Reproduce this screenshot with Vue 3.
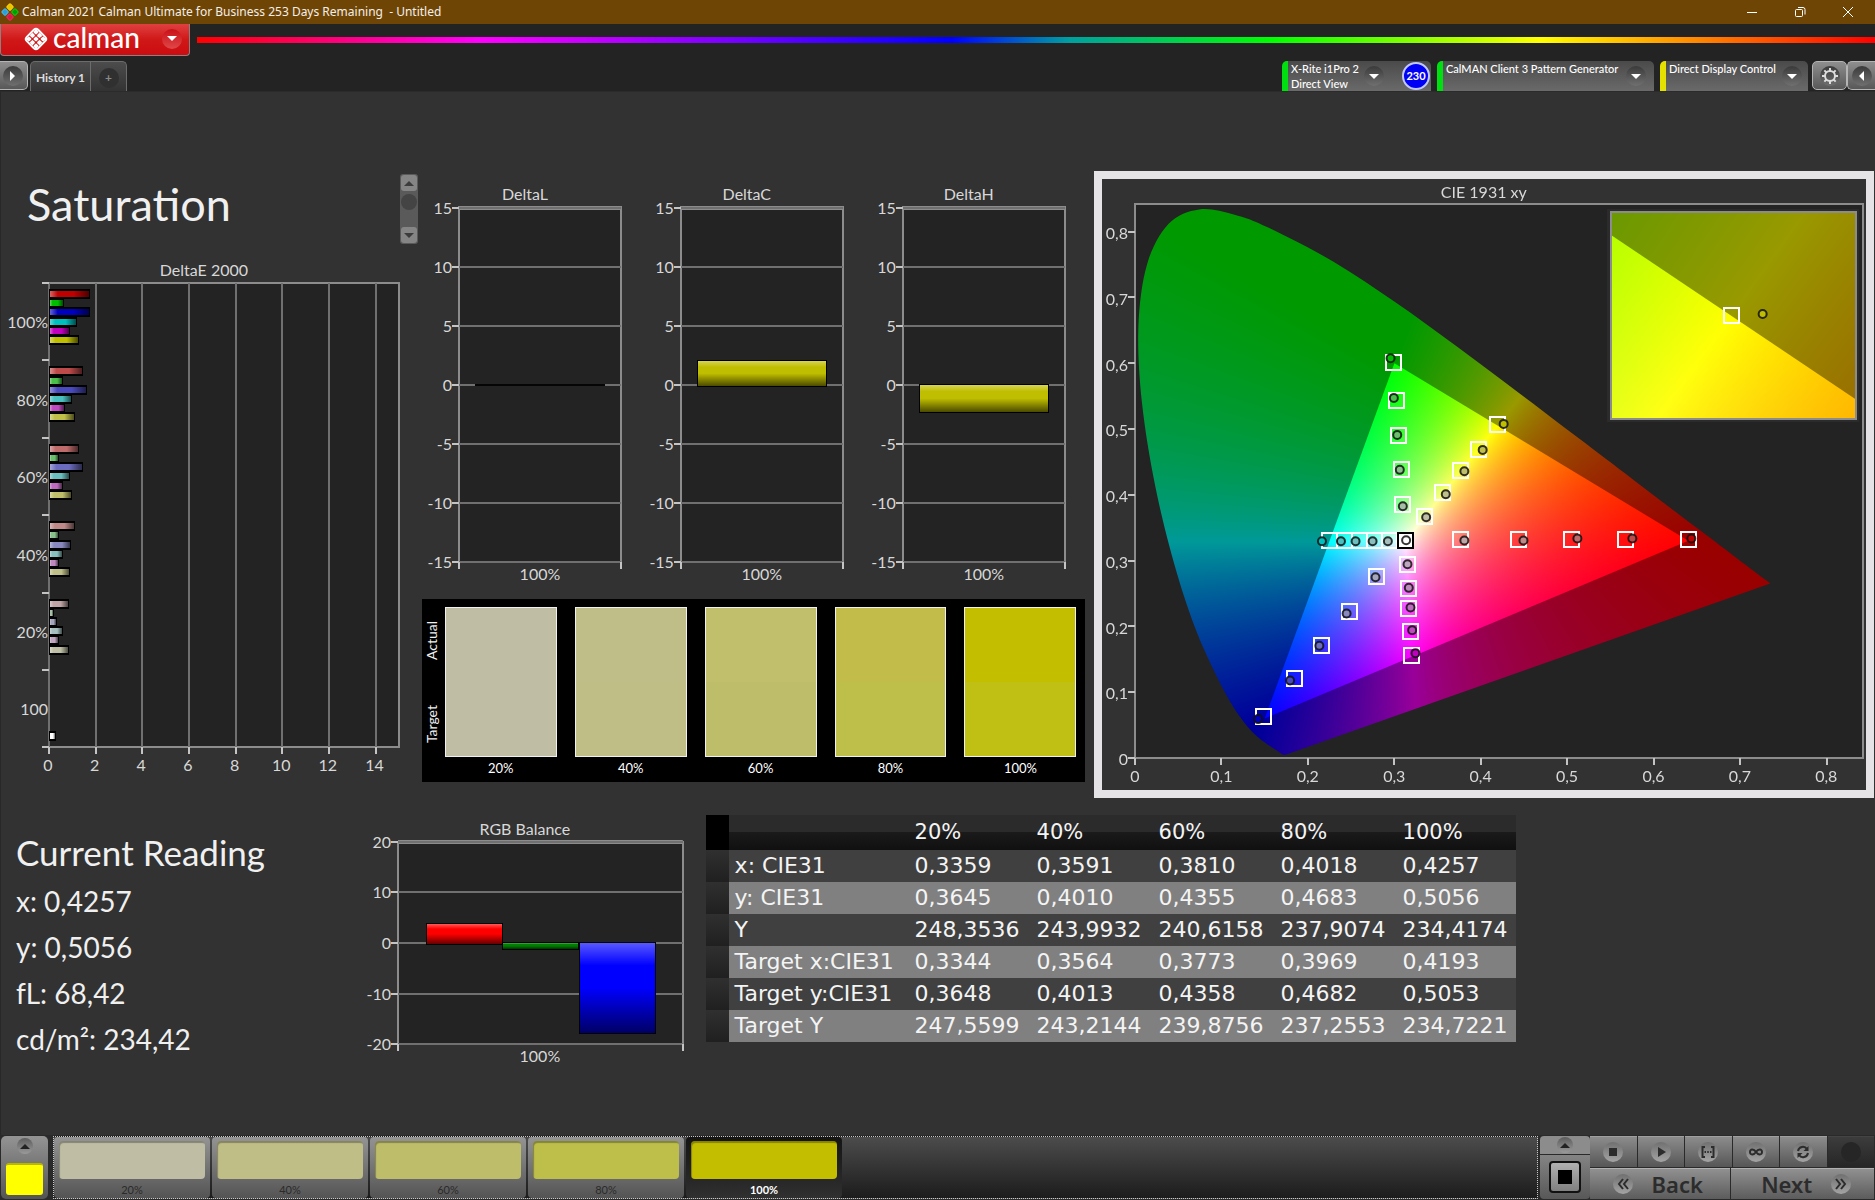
<script setup>
import { ref, onMounted } from 'vue'

const levels = ['20%', '40%', '60%', '80%', '100%']
const mix = { 20: 165, 40: 137, 60: 107, 80: 74, 100: 0 }

// channel masks for the six measured hues
const hues = {
  red: [1, 0, 0],
  green: [0, 1, 0],
  blue: [0, 0, 1],
  cyan: [0, 1, 1],
  magenta: [1, 0, 1],
  yellow: [1, 1, 0]
}
const tint = (hue, level) =>
  `rgb(${hues[hue].map(on => (on ? 191 : mix[level])).join(',')})`

/* DeltaE 2000 */
const deltaE = [
  { label: '100%', level: 100, values: [1.76, 0.66, 1.76, 1.22, 0.9, 1.3] },
  { label: '80%', level: 80, values: [1.44, 0.58, 1.62, 1, 0.68, 1.1] },
  { label: '60%', level: 60, values: [1.3, 0.42, 1.44, 0.92, 0.58, 0.98] },
  { label: '40%', level: 40, values: [1.1, 0.42, 0.96, 0.62, 0.42, 0.92] },
  { label: '20%', level: 20, values: [0.84, 0.22, 0.36, 0.58, 0.42, 0.84] }
]
const groupH = 77.4
const unitX = 350 / 15
const eTop = 27
const hueNames = Object.keys(hues)
const eBars = deltaE.flatMap((g, gi) =>
  g.values.map((v, i) => ({
    y: Math.round(eTop + gi * groupH + 6 + i * 9.2),
    w: Math.round(v * unitX),
    fill: tint(hueNames[i], g.level)
  }))
)
eBars.push({ y: Math.round(eTop + 5 * groupH + 61), w: 7, fill: '#ffffff' })
const eLabels = [...deltaE.map(g => g.label), '100']
const eTicks = [0, 2, 4, 6, 8, 10, 12, 14]

/* DeltaL / DeltaC / DeltaH */
const deltas = [
  { name: 'DeltaL', value: 0 },
  { name: 'DeltaC', value: 2.1 },
  { name: 'DeltaH', value: -2.3 }
]
const deltaTicks = [15, 10, 5, 0, -5, -10, -15]
const dy = v => Math.round(214 - v * 11.8)

/* RGB balance */
const rgbTicks = [20, 10, 0, -10, -20]
const ry = v => Math.round(129 - v * 5.06)
const rgbBars = [
  { x: 66, value: 4, fill: '#ff0000' },
  { x: 142, value: -1.2, fill: '#008000' },
  { x: 219, value: -17.8, fill: '#0000ff' }
]

const swatches = [
  ['#bfbea5', '#bfbea5'],
  ['#c0be88', '#bfbe87'],
  ['#c1bf6b', '#bebd6a'],
  ['#c2bc4a', '#bdbf4a'],
  ['#c4be00', '#bfbf14']
]

const readings = ['x: 0,4257', 'y: 0,5056', 'fL: 68,42', 'cd/m²: 234,42']

const rows = [
  ['x: CIE31', '0,3359', '0,3591', '0,3810', '0,4018', '0,4257'],
  ['y: CIE31', '0,3645', '0,4010', '0,4355', '0,4683', '0,5056'],
  ['Y', '248,3536', '243,9932', '240,6158', '237,9074', '234,4174'],
  ['Target x:CIE31', '0,3344', '0,3564', '0,3773', '0,3969', '0,4193'],
  ['Target y:CIE31', '0,3648', '0,4013', '0,4358', '0,4682', '0,5053'],
  ['Target Y', '247,5599', '243,2144', '239,8756', '237,2553', '234,7221']
]

/* CIE 1931 chart: plot area inside a 764 x 611 drawing */
const plot = { x: 33, y: 25, w: 728, h: 554, range: 0.842 }
const inset = { x: 509, y: 33, w: 245, h: 207, cx: 0.4193, cy: 0.5053, range: 0.049 }
const px = x => plot.x + (x * plot.w) / plot.range
const py = y => plot.y + plot.h - (y * plot.h) / plot.range
const cieTicks = [0, 1, 2, 3, 4, 5, 6, 7, 8]
const cieLabel = t => (t ? '0,' + t : '0')

const targets = [
  [.2988, .6013], [.3019, .5435], [.3038, .4903], [.3076, .4397], [.3092, .3855],
  [.4185, .5070], [.3962, .4701], [.3762, .4371], [.3546, .4047], [.3338, .3672],
  [.2245, .3307], [.2422, .3307], [.2591, .3307], [.2768, .3307], [.2942, .3307],
  [.1486, .0633], [.1837, .1210], [.2152, .1722], [.2472, .2234], [.2788, .2771],
  [.3196, .1560], [.3184, .1935], [.3161, .2274], [.3161, .2578], [.3142, .2953],
  [.6392, .3328], [.5669, .3328], [.5039, .3328], [.4431, .3328], [.3761, .3328]
]
const measured = [
  ['green', [[.2946, .6089], [.2984, .5486], [.3023, .4924], [.3053, .4392], [.3088, .3839]]],
  ['yellow', [[.4255, .5091], [.4012, .4696], [.3800, .4371], [.3585, .4022], [.3358, .3672]]],
  ['cyan', [[.2152, .3307], [.2372, .3307], [.2541, .3307], [.2738, .3307], [.2915, .3307]]],
  ['blue', [[.1413, .0602], [.1783, .1190], [.2122, .1717], [.2437, .2208], [.2772, .2760]]],
  ['magenta', [[.3234, .1605], [.3196, .1955], [.3177, .2299], [.3157, .2598], [.3142, .2958]]],
  ['red', [[.6427, .3348], [.5744, .3348], [.5108, .3348], [.4484, .3318], [.3800, .3318]]]
].flatMap(([hue, pts]) => pts.map((p, i) => ({ x: p[0], y: p[1], fill: tint(hue, 100 - i * 20) })))

const locus = [
  [.1741, .0050], [.1714, .0051], [.1689, .0069], [.1644, .0109], [.1566, .0177],
  [.1440, .0297], [.1355, .0399], [.1241, .0578], [.1096, .0868], [.0913, .1327],
  [.0687, .2007], [.0454, .2950], [.0235, .4127], [.0082, .5384], [.0039, .6548],
  [.0139, .7502], [.0389, .8120], [.0743, .8338], [.1142, .8262], [.1547, .8059],
  [.2296, .7543], [.3016, .6923], [.3731, .6245], [.4441, .5547], [.5125, .4866],
  [.5752, .4242], [.6270, .3725], [.6658, .3340], [.6915, .3083], [.7190, .2809],
  [.7300, .2700], [.7347, .2653]
]
const gamut = [[.64, .33], [.30, .60], [.15, .06]]

function colour(x, y) {
  const X = x / y
  const Z = (1 - x - y) / y
  const rgb = [
    3.2406 * X - 1.5372 - 0.4986 * Z,
    -0.9689 * X + 1.8758 + 0.0415 * Z,
    0.0557 * X - 0.2040 + 1.0570 * Z
  ].map(c => Math.max(0, c))
  const top = Math.max(...rgb) || 1
  return rgb.map(c => (c / top) * 255)
}

function field(w, h, toXY, gain) {
  const layer = document.createElement('canvas')
  layer.width = w
  layer.height = h
  const ctx = layer.getContext('2d')
  const img = ctx.createImageData(w, h)
  for (let j = 0, k = 0; j < h; j++) {
    for (let i = 0; i < w; i++, k += 4) {
      const [x, y] = toXY(i + 0.5, j + 0.5)
      const c = colour(x, Math.max(y, 0.001))
      img.data[k] = c[0] * gain
      img.data[k + 1] = c[1] * gain
      img.data[k + 2] = c[2] * gain
      img.data[k + 3] = 255
    }
  }
  ctx.putImageData(img, 0, 0)
  return layer
}

const canvas = ref(null)

onMounted(() => {
  const ctx = canvas.value.getContext('2d')

  const clipped = (trace, layer, at) => {
    ctx.save()
    ctx.beginPath()
    trace()
    ctx.closePath()
    ctx.clip()
    ctx.drawImage(layer, at.x, at.y)
    ctx.restore()
  }

  const main = (i, j) => [(i * plot.range) / plot.w, ((plot.h - j) * plot.range) / plot.h]
  const traceLocus = () => {
    const p = locus.map(([x, y]) => [px(x), py(y)])
    ctx.moveTo(...p[0])
    for (let i = 0; i < p.length - 1; i++) {
      const a = p[Math.max(i - 1, 0)]
      const b = p[i]
      const c = p[i + 1]
      const d = p[Math.min(i + 2, p.length - 1)]
      ctx.bezierCurveTo(
        b[0] + (c[0] - a[0]) / 6, b[1] + (c[1] - a[1]) / 6,
        c[0] - (d[0] - b[0]) / 6, c[1] - (d[1] - b[1]) / 6,
        c[0], c[1]
      )
    }
  }
  clipped(traceLocus, field(plot.w, plot.h, main, 0.6), plot)
  clipped(() => gamut.forEach(([x, y]) => ctx.lineTo(px(x), py(y))), field(plot.w, plot.h, main, 1), plot)

  const near = (i, j) => [
    inset.cx + (i / inset.w - 0.49) * inset.range,
    inset.cy + (0.5 - j / inset.h) * inset.range
  ]
  ctx.fillStyle = '#2b2b2b'
  ctx.fillRect(inset.x - 4, inset.y - 3, inset.w + 7, inset.h + 6)
  ctx.drawImage(field(inset.w, inset.h, near, 0.6), inset.x, inset.y)
  const edge = x => {
    const y = 0.6 + ((x - 0.3) * (0.33 - 0.6)) / 0.34
    return inset.y + (0.5 - (y - inset.cy) / inset.range) * inset.h
  }
  const [x0] = near(0, 0)
  clipped(() => {
    ctx.moveTo(inset.x, edge(x0))
    ctx.lineTo(inset.x + inset.w, edge(x0 + inset.range))
    ctx.lineTo(inset.x + inset.w, inset.y + inset.h)
    ctx.lineTo(inset.x, inset.y + inset.h)
  }, field(inset.w, inset.h, near, 1), inset)
})

const logoDots = [-1, 0, 1].flatMap(a => [-1, 0, 1].map(b => [a, b]))
</script>

<template>
  <div class="app">
    <header class="titlebar">
      <svg class="app-icon" viewBox="0 0 18 18" aria-hidden="true">
        <g transform="translate(9 9) rotate(45)">
          <rect x="-6" y="-6" width="5" height="5" rx="1" fill="#e9c500" stroke="#ffd400" />
          <rect x="1" y="-6" width="5" height="5" rx="1" fill="#00a000" stroke="#12c812" />
          <rect x="-6" y="1" width="5" height="5" rx="1" fill="#2a9fd8" stroke="#43b8ee" />
          <rect x="1" y="1" width="5" height="5" rx="1" fill="#d81848" stroke="#f02858" />
        </g>
      </svg>
      <span class="title">Calman 2021 Calman Ultimate for Business 253 Days Remaining&nbsp; - Untitled</span>
      <div class="win">
        <button aria-label="Minimize"><svg viewBox="0 0 12 12"><path d="M1 6.5h10" /></svg></button>
        <button aria-label="Restore"><svg viewBox="0 0 12 12"><rect x="1.500" y="3.500" width="7" height="7" rx="1" /><path d="M4 1.500h5a2 2 0 0 1 2 2v5" /></svg></button>
        <button aria-label="Close"><svg viewBox="0 0 12 12"><path d="M1 1l10 10M11 1L1 11" /></svg></button>
      </div>
    </header>

    <div class="brandrow">
      <button class="brand">
        <svg viewBox="-13 -13 26 26" aria-hidden="true">
          <g transform="rotate(45)">
            <rect x="-8" y="-8" width="16" height="16" rx="3" fill="none" stroke="#fff" stroke-width="2" />
            <rect v-for="([a, b], i) in logoDots" :key="i" :x="a * 5 - 2" :y="b * 5 - 2" width="4" height="4" rx="1" fill="#fff" />
          </g>
        </svg>
        <span>calman</span>
        <i class="knob red"><b class="down"></b></i>
      </button>
      <div class="rainbow"></div>
    </div>

    <nav class="tabs">
      <button class="sq first" aria-label="Expand"><i class="knob"><b class="right"></b></i></button>
      <button class="tab">History 1</button>
      <button class="tab add" aria-label="Add tab"><i>+</i></button>
      <div class="devices">
        <button class="device meter green">
          <span>X-Rite i1Pro 2<br />Direct View</span>
          <i class="knob"><b class="down"></b></i>
          <em>230</em>
        </button>
        <button class="device source green">
          <span>CalMAN Client 3 Pattern Generator</span>
          <i class="knob"><b class="down"></b></i>
        </button>
        <button class="device display">
          <span>Direct Display Control</span>
          <i class="knob"><b class="down"></b></i>
        </button>
        <button class="sq" aria-label="Settings">
          <i class="knob">
            <svg viewBox="-10 -10 20 20">
              <circle r="5" fill="none" stroke="#ddd" stroke-width="2" />
              <path v-for="n in 8" :key="n" d="M0 -5v-3" :transform="`rotate(${n * 45})`" stroke="#ddd" stroke-width="2" />
            </svg>
          </i>
        </button>
        <button class="sq last" aria-label="Collapse"><i class="knob"><b class="left"></b></i></button>
      </div>
    </nav>

    <main>
      <section class="top">
        <div class="col-left">
          <div class="heading">
            <h1>Saturation</h1>
            <div class="scroller">
              <button aria-label="Up"><b class="up"></b></button>
              <i></i>
              <button aria-label="Down"><b class="down"></b></button>
            </div>
          </div>
          <svg class="chart" viewBox="0 0 420 541">
            <defs>
              <linearGradient id="shineX">
                <stop offset="0" stop-color="#fff" stop-opacity=".4" />
                <stop offset=".2" stop-color="#fff" stop-opacity="0" />
                <stop offset=".6" stop-color="#000" stop-opacity="0" />
                <stop offset="1" stop-color="#000" stop-opacity=".6" />
              </linearGradient>
              <linearGradient id="shineY" x2="0" y2="1">
                <stop offset="0" stop-color="#fff" stop-opacity=".35" />
                <stop offset=".25" stop-color="#fff" stop-opacity="0" />
                <stop offset=".5" stop-color="#000" stop-opacity="0" />
                <stop offset="1" stop-color="#000" stop-opacity=".6" />
              </linearGradient>
            </defs>
            <text x="204" y="14" class="mid">DeltaE 2000</text>
            <rect x="49" y="27" width="350" height="464" class="plot" />
            <g v-for="t in eTicks" :key="t">
              <path :d="`M${Math.round(49 + t * unitX)} 27V491`" class="grid" />
              <path :d="`M${Math.round(49 + t * unitX)} 491v7`" class="tick" />
              <text :x="48 + t * unitX" y="509" class="mid">{{ t }}</text>
            </g>
            <path v-for="n in 7" :key="n" :d="`M42 ${Math.round(27 + (n - 1) * groupH)}h7`" class="tick" />
            <text v-for="(l, i) in eLabels" :key="i" x="48" :y="66 + i * groupH" class="end">{{ l }}</text>
            <g v-for="(b, i) in eBars" :key="'b' + i" class="crisp">
              <rect x="49" :y="b.y" :width="b.w" height="10" fill="#000" />
              <rect x="50" :y="b.y + 2" :width="b.w - 2" height="6" :fill="b.fill" />
              <rect x="50" :y="b.y + 2" :width="b.w - 2" height="6" fill="url(#shineX)" />
            </g>
          </svg>
        </div>

        <div class="col-mid">
          <svg class="chart" viewBox="0 0 675 428">
            <g v-for="(d, i) in deltas" :key="d.name" :transform="`translate(${39 + i * 222} 0)`">
              <text x="66" y="23" class="mid">{{ d.name }}</text>
              <rect x="0" y="36" width="162" height="355" class="plot" />
              <path d="M0 37h162" class="cap" />
              <g v-for="t in deltaTicks" :key="t">
                <path :d="`M0 ${dy(t)}h162`" class="grid" />
                <path :d="`M-7 ${dy(t)}h7`" class="tick" />
                <text x="-7" :y="dy(t)" class="end">{{ t }}</text>
              </g>
              <path d="M0 391v7M162 391v7" class="tick" />
              <g class="crisp">
                <template v-if="d.value">
                  <rect x="16" :y="Math.min(dy(d.value), 213)" width="130" :height="Math.abs(dy(d.value) - 214) + 2" fill="#000" />
                  <rect x="17" :y="Math.min(dy(d.value), 213) + 1" width="128" :height="Math.abs(dy(d.value) - 214)" fill="#c0be00" />
                  <rect x="17" :y="Math.min(dy(d.value), 213) + 1" width="128" :height="Math.abs(dy(d.value) - 214)" fill="url(#shineY)" />
                </template>
                <rect v-else x="16" y="213" width="130" height="2" fill="#050505" />
              </g>
              <text x="81" y="403" class="mid">100%</text>
            </g>
          </svg>
          <div class="compare">
            <div class="sides"><span>Actual</span><span>Target</span></div>
            <figure v-for="(s, i) in swatches" :key="i">
              <div class="pair"><i :style="{ background: s[0] }"></i><i :style="{ background: s[1] }"></i></div>
              <figcaption>{{ levels[i] }}</figcaption>
            </figure>
          </div>
        </div>

        <div class="cie">
          <canvas ref="canvas" width="764" height="611"></canvas>
          <svg class="chart" viewBox="0 0 764 611">
            <text x="382" y="13" class="mid">CIE 1931 xy</text>
            <rect :x="plot.x" :y="plot.y" :width="plot.w" :height="plot.h" class="frame" />
            <g v-for="t in cieTicks" :key="t">
              <path :d="`M${Math.round(px(t / 10))} 579v7M33 ${Math.round(py(t / 10))}h-7`" class="tick" />
              <text :x="px(t / 10)" y="597" class="mid">{{ cieLabel(t) }}</text>
              <text x="26" :y="py(t / 10) + 1" class="end">{{ cieLabel(t) }}</text>
            </g>
            <rect :x="inset.x" :y="inset.y" :width="inset.w" :height="inset.h" class="frame" />
            <g class="crisp">
              <rect v-for="(t, i) in targets" :key="i" :x="Math.round(px(t[0])) - 7" :y="Math.round(py(t[1])) - 7" width="15" height="15" class="target" />
              <rect :x="Math.round(px(.3123)) - 7" :y="Math.round(py(.3307)) - 7" width="15" height="15" class="white-point" />
              <rect x="622" y="129" width="15" height="15" class="target" />
            </g>
            <circle v-for="(m, i) in measured" :key="'m' + i" :cx="px(m.x) + 1" :cy="py(m.y) + 1" r="4" :fill="m.fill" class="dot" />
            <circle :cx="px(.3126) + 1" :cy="py(.3322) + 1" r="4" fill="#fff" class="dot" />
            <circle cx="661" cy="135" r="4" fill="#c0be00" class="dot" />
          </svg>
        </div>
      </section>

      <section class="bottom">
        <div class="reading">
          <h2>Current Reading</h2>
          <p v-for="r in readings" :key="r">{{ r }}</p>
        </div>
        <svg class="chart" viewBox="0 0 346 256">
          <text x="165" y="15" class="mid">RGB Balance</text>
          <rect x="38" y="28" width="285" height="202" class="plot" />
          <path d="M38 28h285" class="cap" />
          <g v-for="t in rgbTicks" :key="t">
            <path :d="`M38 ${ry(t)}h285`" class="grid" />
            <path :d="`M31 ${ry(t)}h7`" class="tick" />
            <text x="31" :y="ry(t)" class="end">{{ t }}</text>
          </g>
          <path d="M38 230v7M323 230v7" class="tick" />
          <g v-for="b in rgbBars" :key="b.x" class="crisp">
            <rect :x="b.x" :y="Math.min(ry(b.value), 128)" width="77" :height="Math.abs(ry(b.value) - 129) + 2" fill="#000" />
            <rect :x="b.x + 1" :y="Math.min(ry(b.value), 128) + 1" width="75" :height="Math.abs(ry(b.value) - 129)" :fill="b.fill" />
            <rect :x="b.x + 1" :y="Math.min(ry(b.value), 128) + 1" width="75" :height="Math.abs(ry(b.value) - 129)" fill="url(#shineY)" />
          </g>
          <text x="180" y="242" class="mid">100%</text>
        </svg>
        <table>
          <thead>
            <tr><th class="grip"></th><th class="name"></th><th v-for="l in levels" :key="l" scope="col">{{ l }}</th></tr>
          </thead>
          <tbody>
            <tr v-for="r in rows" :key="r[0]"><td class="grip"></td><td v-for="(c, i) in r" :key="i">{{ c }}</td></tr>
          </tbody>
        </table>
      </section>
    </main>

    <footer>
      <button class="current" aria-label="Current colour"><i class="knob small"><b class="up"></b></i><u></u></button>
      <div class="tray">
        <button v-for="(l, i) in levels" :key="l" :class="['chip', { on: i === 4 }]">
          <u :style="{ background: swatches[i][i === 4 ? 0 : 1] }"></u>
          <span>{{ l }}</span>
        </button>
      </div>
      <div class="mode">
        <button aria-label="More"><i class="knob small"><b class="up"></b></i></button>
        <button aria-label="Window"><u></u></button>
      </div>
      <div class="transport">
        <div class="row">
          <button aria-label="Stop"><i class="knob pale"><svg viewBox="0 0 20 20"><rect x="6" y="6" width="8" height="8" fill="#2c2c2c" /></svg></i></button>
          <button aria-label="Play"><i class="knob pale"><svg viewBox="0 0 20 20"><path d="M7 5l8 5-8 5z" fill="#2c2c2c" /></svg></i></button>
          <button aria-label="Step"><i class="knob pale"><svg viewBox="0 0 20 20"><path d="M7 5H4.500v10H7M13 5h2.500v10H13M6.500 10h1.500M9.250 10h1.500M12 10h1.500" class="ink" /></svg></i></button>
          <button aria-label="Loop"><i class="knob pale"><svg viewBox="0 0 20 20"><path d="M10 10C8 7 4 6.500 4 10s4 3 6 0 6-3.500 6 0-4 3-6 0z" class="ink" /></svg></i></button>
          <button aria-label="Refresh"><i class="knob pale"><svg viewBox="0 0 20 20"><path d="M5 9a5 5 0 0 1 9-2M15 11a5 5 0 0 1-9 2" class="ink" /><path d="M15.500 4v5h-5zM4.500 16v-5h5z" fill="#2c2c2c" /></svg></i></button>
          <button class="off" aria-label="Record" disabled><i class="knob dim"></i></button>
        </div>
        <div class="row big">
          <button><i class="knob pale"><svg viewBox="0 0 20 20"><path d="M10 5l-4 5 4 5M15 5l-4 5 4 5" class="ink" /></svg></i><span>Back</span></button>
          <button class="next"><span>Next</span><i class="knob pale"><svg viewBox="0 0 20 20"><path d="M5 5l4 5-4 5M10 5l4 5-4 5" class="ink" /></svg></i></button>
        </div>
      </div>
    </footer>
  </div>
</template>

<style>
body { margin: 0; background: #323232; }
</style>

<style scoped>
* { box-sizing: border-box; }
.app {
  min-height: 100vh;
  display: flex;
  flex-direction: column;
  background: #323232;
  color: #f0f0f0;
  font-family: Lato, "Open Sans", sans-serif;
  overflow: hidden;
}
button { font: inherit; color: inherit; border: 0; padding: 0; margin: 0; background: none; }
i, em { font-style: normal; }
u { text-decoration: none; display: block; }

/* title bar */
.titlebar { display: flex; align-items: center; height: 24px; background: #6f4506; padding-left: 1px; }
.app-icon { width: 18px; height: 18px; }
.title { flex: 1; padding-left: 3px; font: 12px/20px "Noto Sans", sans-serif; color: #f4efe8; white-space: nowrap; }
.win { display: flex; padding-right: 3px; }
.win button { width: 48px; height: 24px; display: grid; place-items: center; }
.win svg { width: 12px; height: 12px; fill: none; stroke: #fff; stroke-width: 1; }

/* brand row */
.brandrow { display: flex; background: #232323; height: 37px; gap: 7px; }
.brand {
  width: 190px; height: 32px; display: flex; align-items: center;
  padding: 0 7px 2px 22px;
  background: linear-gradient(#e04040, #d01818 50%, #cc0c10);
  border: 1px solid #8c8080; border-top: 0; border-radius: 0 0 4px 4px;
}
.brand svg { width: 26px; height: 26px; flex: none; }
.brand span { flex: 1; text-align: left; padding-left: 4px; font-size: 28px; line-height: 30px; font-weight: 500; color: #fff; height: 34px; }
.rainbow {
  flex: 1; height: 6px; margin-top: 13px;
  background: linear-gradient(90deg, #f00, #f0f 17%, #00f 45%, #00a0a0 52%, #0f0 64%, #ff0 80%, #f00);
}

/* knobs and arrows */
.knob {
  width: 20px; height: 20px; border-radius: 50%; flex: none;
  display: grid; place-items: center;
  background: linear-gradient(#3a3a3a, #707070);
}
.knob svg { width: 20px; height: 20px; }
.knob.red { background: linear-gradient(#c81018, #e04848); }
.knob.small { width: 16px; height: 16px; background: linear-gradient(#5c5c5c, #9a9a9a); }
.knob.small .up { border-bottom-color: #222; }
.knob.pale { background: linear-gradient(#707070, #a4a4a4); }
.knob.dim { background: #262626; }
.ink { fill: none; stroke: #2c2c2c; stroke-width: 2; }
b.down, b.up, b.left, b.right { width: 0; height: 0; border: 5px solid transparent; }
b.down { border-top-color: #fff; border-bottom: 0; }
b.up { border-bottom-color: #fff; border-top: 0; }
b.left { border-right-color: #fff; border-left: 0; }
b.right { border-left-color: #fff; border-right: 0; }

/* tabs and devices */
.tabs { display: flex; height: 31px; background: #232323; border-bottom: 1px solid #2b2b2b; }
.sq {
  width: 35px; height: 29px; display: grid; place-items: center;
  background: linear-gradient(#8e8e8e, #585858);
  border: 1px solid #b4b4b4; border-radius: 5px;
}
.sq.first { width: 28px; border-left: 0; border-radius: 0 5px 5px 0; padding-right: 2px; margin-right: 2px; }
.sq.last { width: 28px; border-right: 0; border-radius: 5px 0 0 5px; }
.tab {
  width: 61px; height: 30px; font-size: 12px; font-weight: 700; color: #dcdcdc; white-space: nowrap;
  background: linear-gradient(#4c4c4c, #333); border: 1px solid #6c6c6c; border-bottom: 0; border-radius: 5px 0 0 0;
  padding-top: 2px;
}
.tab.add { width: 36px; border-left: 0; border-radius: 0 5px 0 0; display: grid; place-items: center; }
.tab.add i { width: 20px; height: 20px; line-height: 20px; border-radius: 50%; background: #303030; color: #8a8a8a; font-size: 12px; }
.devices { margin-left: auto; display: flex; }
.device {
  display: flex; height: 30px; padding: 0 6px 0 3px; margin-right: 6px;
  background: linear-gradient(#4a4a4a, #6a6a6a);
  border-left: 6px solid #e4e000; border-radius: 5px 5px 0 0;
}
.device.green { border-left-color: #00e010; }
.device span { flex: 1; text-align: left; font-size: 11px; font-weight: 500; line-height: 15px; color: #fff; white-space: nowrap; }
.device .knob { align-self: center; }
.device em {
  width: 28px; height: 28px; line-height: 24px; margin: 1px 0 0 18px; border-radius: 50%; background: #0000f4; border: 2px solid #c0c8ff;
  font-size: 11px; font-weight: 700; color: #fff; text-align: center;
}
.device.meter { width: 149px; padding-right: 1px; }
.device.source { width: 217px; padding-right: 8px; }
.device.display { width: 148px; margin-right: 4px; }

/* workspace */
main { flex: 1; border-left: 1px solid #282828; padding-top: 79px; margin-right: 1px; }
.top { display: grid; grid-template-columns: 420fr 675fr 780fr; margin-left: -1px; }
.top > div, .bottom > * { min-width: 0; }
.chart { display: block; width: 100%; height: auto; font-size: 16px; }
.chart text { fill: #d8d8d8; dominant-baseline: central; }
.mid { text-anchor: middle; }
.end { text-anchor: end; }
.plot { fill: #232323; stroke: #8c8c8c; stroke-width: 2; shape-rendering: crispEdges; }
.frame { fill: none; stroke: #8c8c8c; stroke-width: 2; shape-rendering: crispEdges; }
.grid { stroke: #707070; stroke-width: 2; shape-rendering: crispEdges; }
.cap { stroke: #8c8c8c; stroke-width: 4; }
.tick { stroke: #c4c4c4; stroke-width: 2; shape-rendering: crispEdges; fill: none; }
.crisp { shape-rendering: crispEdges; }
.target { fill: none; stroke: #fff; stroke-width: 2; }
.white-point { fill: #fff; stroke: #000; stroke-width: 2; }
.dot { stroke: #101010; stroke-width: 2; stroke-opacity: .85; }

.heading { display: flex; justify-content: space-between; padding: 3px 2px 0 27px; height: 85px; }
h1 { margin: 0; font-weight: 400; font-size: 45px; line-height: 60px; }
.scroller {
  width: 18px; height: 70px; display: flex; flex-direction: column; align-items: center; padding: 1px;
  background: #5a5a5a; border-radius: 3px;
}
.scroller button { width: 16px; height: 16px; background: #858585; border-radius: 3px; display: grid; place-items: center; }
.scroller b.up { border-bottom-color: #3c3c3c; }
.scroller b.down { border-top-color: #3c3c3c; }
.scroller i { width: 16px; height: 16px; border-radius: 50%; background: #444; margin: 3px 0 auto; }

.compare { display: flex; gap: 18px; height: 183px; margin: 0 9px 0 2px; padding: 8px 9px 0 0; background: #000; }
.sides { display: flex; flex-direction: column; justify-content: space-between; width: 20px; height: 150px; padding: 14px 0; margin-right: -15px; }
.sides span { writing-mode: vertical-rl; transform: rotate(180deg); font-size: 14px; line-height: 20px; }
figure { flex: 1; margin: 0; }
.pair { height: 150px; border: 1px solid #f0f0f0; display: flex; flex-direction: column; }
.pair i { flex: 1; }
figcaption { text-align: center; font-size: 13px; line-height: 22px; color: #fff; }

.cie { display: grid; border: 8px solid #e6e3e6; background: #323232; }
.cie canvas, .cie svg { grid-area: 1 / 1; width: 100%; height: auto; }
.cie canvas { background: linear-gradient(#232323, #232323) 33px 25px / 728px 554px no-repeat; }

.bottom { display: grid; grid-template-columns: 359fr 346fr 811fr 358fr; align-items: start; padding-top: 16px; }
.reading { padding: 14px 0 0 15px; }
h2 { margin: 0 0 2px; font-weight: 400; font-size: 35px; line-height: 48px; }
.reading p { margin: 0; font-size: 28px; line-height: 46px; }

table { border-collapse: collapse; table-layout: fixed; width: 100%; margin-top: 1px; font: 22px/30px "DejaVu Sans", sans-serif; color: #f4f4f4; }
th { width: 122px; height: 35px; padding: 0; font-weight: 400; font-size: 21px; text-align: left; background: linear-gradient(#2b2b2b 50%, #1a1a1a 50%, #101010); }
th:last-child { width: auto; }
td { height: 32px; padding: 0; white-space: nowrap; background: #404040; }
th.grip { width: 23px; background: #000; }
th.name { width: 186px; }
td.grip { background: linear-gradient(#303030, #202020); }
td:nth-child(2) { padding-left: 6px; }
tbody tr:nth-child(even) td:not(.grip) { background: #808080; }

/* bottom bar */
footer { display: flex; height: 65px; padding-top: 1px; background: #2a2a2a; }
.current, .mode button, .chip { background: linear-gradient(#949494, #545454); }
.current { width: 47px; height: 63px; margin: 0 5px 0 1px; border-radius: 5px; display: flex; flex-direction: column; align-items: center; justify-content: space-between; padding: 2px 0 4px; }
.current u { width: 37px; height: 32px; background: #ff0; border-radius: 3px; border-top: 2px solid #b8b800; }
.tray { flex: 1; display: flex; gap: 2px; height: 63px; border: 1px dotted #c8c8c8; background: linear-gradient(#4c4c4c, #1c1c1c); }
.chip { width: 156px; height: 61px; border-radius: 4px; padding: 4px 5px 0; font-size: 11px; color: #2a2a2a; }
.chip u { height: 38px; border-radius: 4px; box-shadow: inset 1px 2px 1px rgba(0, 0, 0, .3); }
.chip span { display: block; line-height: 22px; }
.chip.on { background: linear-gradient(#141414, #303030); color: #fff; font-weight: 700; }
.mode { width: 50px; margin-left: 2px; display: flex; flex-direction: column; gap: 1px; }
.mode button { display: grid; place-items: center; height: 18px; border-radius: 4px 4px 0 0; background: #8c8c8c; }
.mode button + button { height: 44px; border-radius: 0 0 4px 4px; background: linear-gradient(#848484, #585858); }
.mode u { width: 32px; height: 32px; border: 2px solid #111; border-radius: 4px; background: linear-gradient(#000, #000) center / 14px 14px no-repeat, linear-gradient(#b0b0b0, #808080); }
.transport { width: 284px; display: flex; flex-direction: column; gap: 1px; margin-right: 1px; }
.row { display: flex; gap: 1px; height: 31px; }
.row button { flex: 1; display: flex; align-items: center; justify-content: center; background: linear-gradient(#8c8c8c, #565656); border-top: 1px solid #a0a0a0; }
.row button.off { background: linear-gradient(#3c3c3c, #262626); border-top-color: #444; }
.row.big button { gap: 19px; padding-right: 4px; background: linear-gradient(#909090, #5c5c5c); border-top-color: #b0b0b0; }
.row.big button.next { padding: 0 0 0 8px; }
.row.big span { font: 600 22px/28px "Noto Sans", sans-serif; color: #2c2c2c; }
</style>
